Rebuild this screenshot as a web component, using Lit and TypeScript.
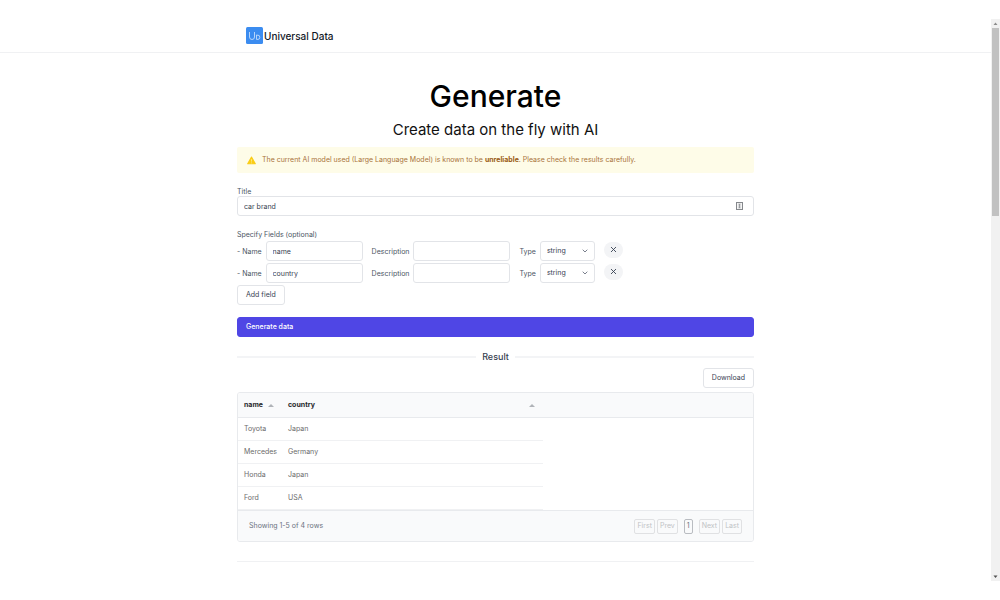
import { LitElement, html, css, svg } from "lit";
import { customElement, state } from "lit/decorators.js";

interface Field {
  name: string;
  description: string;
}

const cross = svg`<path d="M1 1 L6 6 M6 1 L1 6" fill="none" stroke="#374151" stroke-width="0.9"/>`;

@customElement("app-root")
export class AppRoot extends LitElement {
  @state() private fields: Field[] = [
    { name: "name", description: "" },
    { name: "country", description: "" },
  ];

  private rows = [
    ["Toyota", "Japan"],
    ["Mercedes", "Germany"],
    ["Honda", "Japan"],
    ["Ford", "USA"],
  ];

  static styles = css`
    :host {
      display: flex;
      box-sizing: border-box;
      min-height: 100vh;
      padding: 19px 0;
      background: #fff;
      color: #4b5563;
      font: 400 7px/12px Inter, sans-serif;
    }
    *, *::before, *::after { box-sizing: border-box; }
    .page { flex: 1; min-width: 0; }
    .wrap { width: 100%; max-width: 517px; margin: 0 auto; }
    .bar { border-bottom: 1px solid #f0f1f3; }
    .brand {
      display: flex;
      align-items: center;
      gap: 1px;
      height: 33px;
      padding: 0 9px;
      color: #111827;
      font-size: 10px;
      line-height: 16px;
      font-weight: 500;
      text-decoration: none;
    }
    .logo { display: block; width: 17px; height: 17px; }
    h1 {
      margin: 22px 0 0;
      color: #000;
      font-size: 30px;
      line-height: 42px;
      font-weight: 500;
      text-align: center;
    }
    .lead {
      margin: 0;
      color: #111;
      font-size: 15px;
      line-height: 26px;
      text-align: center;
    }
    .alert {
      display: flex;
      align-items: center;
      gap: 6px;
      min-height: 26px;
      margin-top: 4px;
      padding: 0 10px;
      border-radius: 2px;
      background: #fefce8;
      color: #a9733a;
    }
    .alert b { color: #9a5a12; }
    .alert svg { flex: none; width: 9px; height: 9px; }
    label, legend { padding: 2px 0 0; line-height: 8px; white-space: nowrap; }
    .title-group { display: grid; margin-top: 13px; }
    input, select, button {
      height: 20px;
      margin: 0;
      border: 1px solid #e2e4e8;
      border-radius: 3px;
      background: #fff;
      color: #374151;
      font: inherit;
    }
    input { width: 100%; min-width: 0; padding: 0 6px; }
    button { padding: 0 8px; cursor: pointer; }
    .overlay { display: grid; align-items: center; }
    .overlay > * { grid-area: 1 / 1; }
    .overlay svg { justify-self: end; pointer-events: none; }
    .badge { width: 7px; height: 8px; margin-right: 11px; }
    .chevron { width: 6px; height: 4px; margin-right: 7px; }
    select { width: 100%; padding: 0 6px; appearance: none; }
    fieldset { margin: 13px 0 0; padding: 0; border: 0; min-width: 0; }
    .fields { display: grid; gap: 2px; padding-top: 2px; }
    .field { display: flex; align-items: center; gap: 9px; }
    .pair { display: flex; align-items: center; gap: 4px; }
    .pair input { width: 97px; }
    .pair .overlay { width: 55px; }
    .remove {
      display: grid;
      place-items: center;
      width: 19px;
      height: 16px;
      padding: 0;
      margin-bottom: 3px;
      border: 0;
      border-radius: 8px;
      background: #f3f4f6;
    }
    .remove svg { width: 7px; height: 7px; }
    .add { justify-self: start; }
    .generate {
      display: block;
      width: 100%;
      margin-top: 12px;
      border-color: #4f46e5;
      background: #4f46e5;
      color: #fff;
      font-weight: 500;
      text-align: left;
    }
    h2 {
      display: flex;
      align-items: center;
      gap: 6px;
      margin: 12px 0 0;
      color: #374151;
      font-size: 9px;
      line-height: 16px;
      font-weight: 500;
    }
    h2::before, h2::after {
      content: "";
      flex: 1;
      height: 2px;
      background: #f3f4f6;
    }
    .tools { display: flex; justify-content: flex-end; margin: 3px 0 4px; }
    .grid {
      overflow: hidden;
      border: 1px solid #e8eaed;
      border-radius: 3px;
    }
    table {
      width: 100%;
      table-layout: fixed;
      border-collapse: separate;
      border-spacing: 0;
      color: #6b6b6b;
    }
    .col-name { width: 44px; }
    .col-country { width: 261px; }
    th, td {
      height: 23px;
      padding: 0 6px;
      text-align: left;
      border-bottom: 1px solid #f0f1f3;
      white-space: nowrap;
    }
    th {
      height: 25px;
      background: #f9fafb;
      border-color: #e8eaed;
      color: #27272a;
      font-weight: 700;
    }
    .head { display: flex; justify-content: space-between; align-items: center; }
    .head svg { width: 6px; height: 3px; margin-right: 2px; }
    .foot {
      display: flex;
      align-items: center;
      justify-content: space-between;
      min-height: 31px;
      padding: 0 11px;
      border-top: 1px solid #e8eaed;
      background: #f9fafb;
      color: #6b7280;
    }
    .pager { display: flex; gap: 2px; }
    .pager button {
      height: 15px;
      padding: 0 2px;
      border-color: #e0e1e3;
      border-radius: 2px;
      background: transparent;
      color: #c0c2c5;
    }
    .pager .current { margin: 0 4px; border-color: #b9bcc1; color: #6b7280; }
    hr { margin: 19px 0 0; border: 0; border-top: 1px solid #f0f1f3; }
    .scroll {
      display: flex;
      flex: none;
      flex-direction: column;
      align-items: center;
      width: 9px;
      background: #f1f1f1;
    }
    .scroll svg { flex: none; width: 9px; height: 9px; }
    .track { flex: 1; width: 7px; }
    .thumb { height: 34.5%; background: #c1c1c1; }
  `;

  private renderField(field: Field, index: number) {
    return html`<div class="field">
      <div class="pair">
        <label for="name-${index}">- Name</label>
        <input id="name-${index}" .value=${field.name} />
      </div>
      <div class="pair">
        <label for="desc-${index}">Description</label>
        <input id="desc-${index}" .value=${field.description} />
      </div>
      <div class="pair">
        <label for="type-${index}">Type</label>
        <div class="overlay">
          <select id="type-${index}"><option>string</option><option>number</option></select>
          <svg class="chevron" viewBox="0 0 6 4"><path d="M0.7 0.7 L3 3 L5.3 0.7" fill="none" stroke="#6b7280" stroke-width="0.9"/></svg>
        </div>
      </div>
      <button class="remove" aria-label="Remove field" @click=${() => this.remove(index)}>
        <svg viewBox="0 0 7 7">${cross}</svg>
      </button>
    </div>`;
  }

  private remove(index: number) {
    this.fields = this.fields.filter((_, i) => i !== index);
  }

  private add() {
    this.fields = [...this.fields, { name: "", description: "" }];
  }

  render() {
    const sort = html`<svg viewBox="0 0 6 3"><path d="M0 3 L3 0 L6 3 Z" fill="#b0b3b8"/></svg>`;
    return html`
      <div class="page">
        <header class="bar">
          <div class="wrap">
            <a class="brand" href="#">
              <svg class="logo" viewBox="0 0 17 17">
                <rect width="17" height="17" rx="1.5" fill="#3b8cf0"/>
                <path d="M3.5 5 V10 Q3.5 12.5 6 12.5 Q8.5 12.5 8.5 10 V5 M10.5 7.8 V12.4 H12 Q13.8 12.4 13.8 10.3 Q13.8 8.2 12 8.2 H10.5" fill="none" stroke="#c3ddfb" stroke-width="0.9"/>
              </svg>
              <span>Universal Data</span>
            </a>
          </div>
        </header>
        <main class="wrap">
          <h1>Generate</h1>
          <p class="lead">Create data on the fly with AI</p>
          <div class="alert" role="alert">
            <svg viewBox="0 0 9 9">
              <path d="M4.5 1 L8.3 7.8 H0.7 Z" fill="#facc15" stroke="#facc15" stroke-width="1.1" stroke-linejoin="round"/>
              <path d="M4.5 3.2 V5.6 M4.5 6.4 V7.3" stroke="#fefce8" stroke-width="0.5"/>
            </svg>
            <span>The current AI model used (Large Language Model) is known to be <b>unreliable</b>. Please check the results carefully.</span>
          </div>
          <div class="title-group">
            <label for="title">Title</label>
            <div class="overlay">
              <input id="title" .value=${"car brand"} />
              <svg class="badge" viewBox="0 0 7 8">
                <rect x="0.5" y="0.5" width="6" height="7" fill="#f4f4f4" stroke="#85888c"/>
                <path d="M3.5 2 V6 M2.4 2.2 H4.6 M2.4 5.8 H4.6 M2.4 4 H4.6" stroke="#85888c" stroke-width="0.7"/>
              </svg>
            </div>
          </div>
          <fieldset>
            <legend>Specify Fields (optional)</legend>
            <div class="fields">
              ${this.fields.map((f, i) => this.renderField(f, i))}
              <button class="add" @click=${this.add}>Add field</button>
            </div>
          </fieldset>
          <button class="generate">Generate data</button>
          <h2>Result</h2>
          <div class="tools"><button>Download</button></div>
          <div class="grid">
            <table>
              <colgroup><col class="col-name" /><col class="col-country" /><col /></colgroup>
              <thead>
                <tr>
                  <th><div class="head">name ${sort}</div></th>
                  <th><div class="head">country ${sort}</div></th>
                  <th></th>
                </tr>
              </thead>
              <tbody>
                ${this.rows.map((r) => html`<tr>${r.map((c) => html`<td>${c}</td>`)}</tr>`)}
              </tbody>
            </table>
            <div class="foot">
              <span>Showing 1-5 of 4 rows</span>
              <nav class="pager" aria-label="Pages">
                <button>First</button><button>Prev</button><button class="current">1</button><button>Next</button><button>Last</button>
              </nav>
            </div>
          </div>
          <hr />
        </main>
      </div>
      <div class="scroll" aria-hidden="true">
        <svg viewBox="0 0 9 9"><path d="M2.5 6 L4.5 3.5 L6.5 6 Z" fill="#8b8b8b"/></svg>
        <div class="track"><div class="thumb"></div></div>
        <svg viewBox="0 0 9 9"><path d="M2.5 3.5 L4.5 6 L6.5 3.5 Z" fill="#505050"/></svg>
      </div>
    `;
  }
}
